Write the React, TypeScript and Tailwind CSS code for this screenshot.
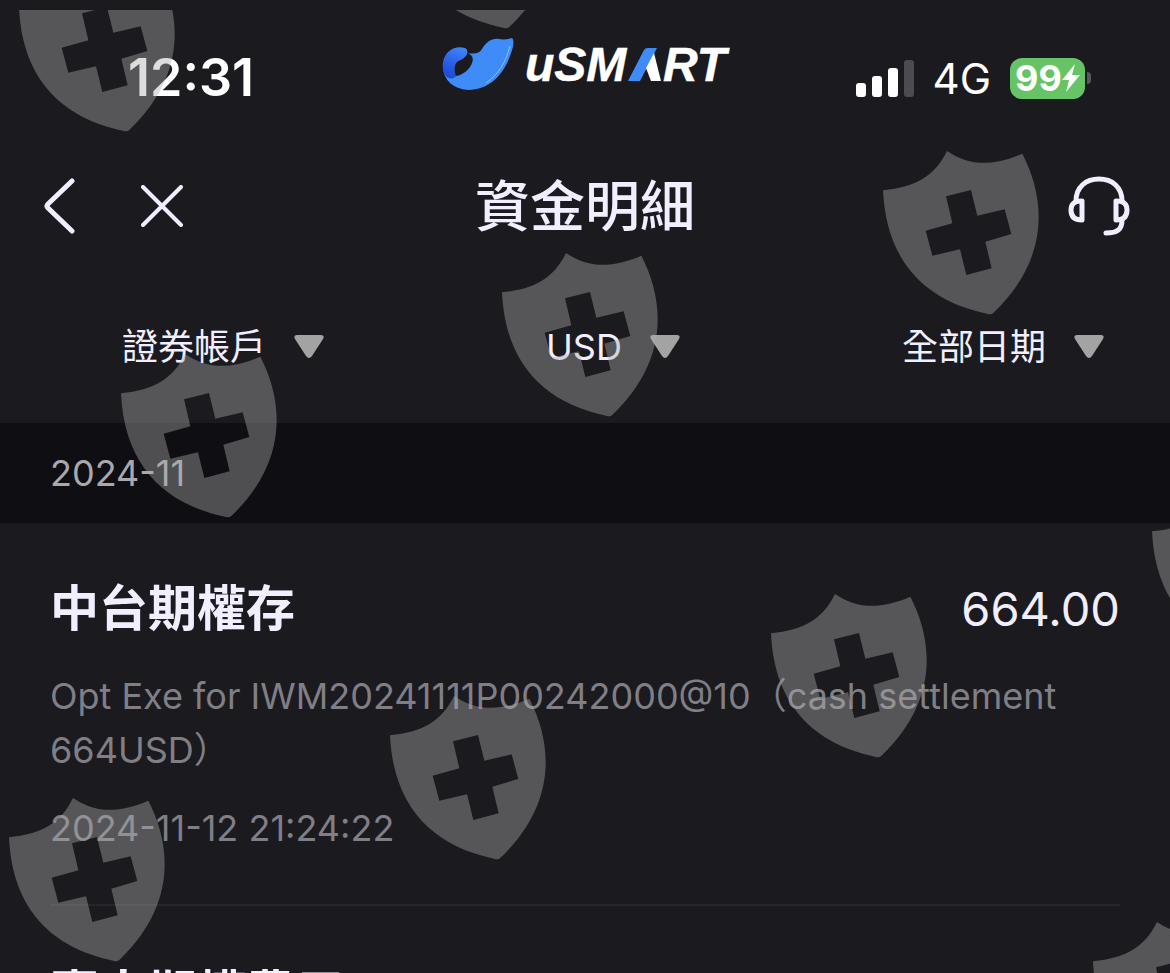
import React from "react";

const SHIELDS: [number, number][] = [
  [19, -42],
  [399, -145],
  [883, 141],
  [502, 243],
  [121, 344],
  [1152, 482],
  [771, 584],
  [390, 686],
  [9, 788],
  [1093, 912],
];

function Watermark() {
  return (
    <svg className="pointer-events-none absolute inset-x-0 top-2.5 bottom-0 h-full w-full overflow-hidden" aria-hidden="true">
      <defs>
        <symbol id="shield" viewBox="0 0 468 492">
          <path
            fillRule="evenodd"
            d="M0 118C100 108 155 75 192 0C260 46 330 46 418 8C486 140 505 320 330 487Q324 492 312 488C130 450 10 335 0 118ZM189 136L264 117L283 194L365 175L385 249L307 272L326 352L250 372L231 295L148 314L128 239L208 217Z"
          />
        </symbol>
      </defs>
      <g fill="#acacac" fillOpacity="0.41">
        {SHIELDS.map(([x, y]) => (
          <use key={`${x}-${y}`} href="#shield" x={x} y={y} width="156" height="164" />
        ))}
      </g>
    </svg>
  );
}

function Logo() {
  return (
    <svg width="290" height="56" viewBox="-2 0 290 56" role="img" aria-label="uSMART">
      <defs>
        <linearGradient id="head" x1="0.7" y1="0" x2="0.4" y2="1">
          <stop offset="0" stopColor="#3f86f6" />
          <stop offset="0.45" stopColor="#2f66ea" />
          <stop offset="1" stopColor="#1d48d6" />
        </linearGradient>
      </defs>
      <path
        d="M1 32C6 41 10 42 14 40C21 39 28 33 30 27C32 22 30 19 26 17C32 18 37 18 40 13C44 6 50 2 57 3C62 4 66 3 70 2C73 5 71 12 68 20C61 40 46 54 26 54C11 53 2 44 1 32Z"
        fill="#3f8bf7"
      />
      <path d="M14 40C12 35 12 29 15 26C17 24 22 24 25 18C26 15 25 13 23 12C13 9 3 15 1 26C0 33 2 38 5 41C8 43 12 43 14 40Z" fill="url(#head)" />
      <path d="M68 10C64 26 56 39 44 47" fill="none" stroke="#8fc0ff" strokeWidth="1" />
      <g fill="#fff" stroke="#fff" strokeWidth="0.5" fontFamily="Liberation Sans, sans-serif" fontSize="48" fontWeight="700" fontStyle="italic">
        <text x="83" y="45">uSM</text>
        <text x="221" y="45">RT</text>
      </g>
      <path d="M186 45L202 14Q203 12 206 12H215L198 45Z" fill="#3f8bf7" />
      <path d="M212 17L219 45H209L204 32Z" fill="#fff" />
    </svg>
  );
}

function Battery() {
  return (
    <div className="flex items-center gap-0.5">
      <div className="flex h-[41px] w-[75px] items-center justify-center rounded-xl bg-[#67c466] text-4xl font-bold">
        <span>99</span>
        <svg width="18" height="28" viewBox="0 0 18 28" fill="#fff" aria-hidden="true">
          <path d="M13 0L0 16H7L4 28L18 11H10Z" />
        </svg>
      </div>
      <div className="h-3 w-1 rounded-r-full bg-[#58575c]" />
    </div>
  );
}

function Signal() {
  return (
    <div className="flex items-end gap-1.5" role="img" aria-label="Signal">
      <div className="h-3.5 w-2.5 rounded-[3px] bg-white" />
      <div className="h-[21px] w-2.5 rounded-[3px] bg-white" />
      <div className="h-[29px] w-2.5 rounded-[3px] bg-white" />
      <div className="h-[37px] w-2.5 rounded-[3px] bg-[#4c4b50]" />
    </div>
  );
}

function Filter({ label }: { label: string }) {
  return (
    <button className="flex items-center gap-7 text-4xl font-normal text-[#f1eeff]">
      <span>{label}</span>
      <svg width="30" height="24" viewBox="0 0 30 24" aria-hidden="true">
        <path d="M3 0H27Q31 0 29 4L18 21Q15 25 12 21L1 4Q-1 0 3 0Z" fill="#a3a3a3" />
      </svg>
    </button>
  );
}

export default function App() {
  return (
    <div className="relative flex h-screen flex-col overflow-hidden bg-[#1b1a1f] font-['Inter','Noto_Sans_CJK_TC',sans-serif] text-[#f1eeff]">
      <div className="grid h-[130px] shrink-0 grid-cols-3 items-center pt-[26px] text-white">
        <div className="pl-32 text-[52px] font-semibold">12:31</div>
        <div className="flex justify-center self-start pt-2.5">
          <Logo />
        </div>
        <div className="flex items-center justify-end gap-[19px] pr-[79px]">
          <Signal />
          <span className="text-[42px]">4G</span>
          <Battery />
        </div>
      </div>

      <header className="grid h-[152px] shrink-0 grid-cols-[1fr_auto_1fr] items-center px-10">
        <div className="flex items-center gap-[63px]">
          <button aria-label="返回">
            <svg width="38" height="56" viewBox="0 0 38 56" fill="none" stroke="currentColor" strokeWidth="5" strokeLinecap="round" strokeLinejoin="round">
              <path d="M32 3L8 26Q6 28 8 30L32 53" />
            </svg>
          </button>
          <button aria-label="關閉">
            <svg width="42" height="42" viewBox="0 0 42 42" fill="none" stroke="currentColor" strokeWidth="4" strokeLinecap="round">
              <path d="M2 2L40 40M40 2L2 40" />
            </svg>
          </button>
        </div>
        <h1 className="text-[55px] font-medium">資金明細</h1>
        <button className="justify-self-end" aria-label="客服">
          <svg width="62" height="60" viewBox="0 0 62 60" fill="none" stroke="currentColor" strokeWidth="5" strokeLinecap="round" strokeLinejoin="round">
            <path d="M8 25C8 11 18 3 31 3S54 11 54 25" />
            <path d="M14 25V44C7 44 3 41 3 34S7 25 14 25Z" />
            <path d="M48 25V44C55 44 59 41 59 34S55 25 48 25Z" />
            <path d="M54 44C54 53 50 57 38 57" />
          </svg>
        </button>
      </header>

      <div className="flex h-[141px] shrink-0 items-start justify-between pr-[66px] pl-[122px] pt-[45px]">
        <Filter label="證券帳戶" />
        <Filter label="USD" />
        <Filter label="全部日期" />
      </div>

      <h2 className="flex h-[100px] shrink-0 items-center bg-[#0f0e13] px-[50px] text-4xl font-normal text-[#a9a8ac]">2024-11</h2>

      <main className="px-[50px]">
        <article className="border-b-2 border-[#26252b] pt-[50px] pb-[49px]">
          <div className="flex items-center justify-between">
            <h3 className="text-[49px] leading-[72px] font-bold">中台期權存</h3>
            <span className="text-[47px]">664.00</span>
          </div>
          <p className="mt-6 text-4xl leading-[54px] font-normal text-[#807f86]">
            Opt Exe for IWM20241111P00242000@10（cash settlement 664USD）
          </p>
          <time className="mt-6 block text-4xl leading-[54px] font-normal text-[#807f86]">2024-11-12 21:24:22</time>
        </article>
        <article className="pt-[52px]">
          <h3 className="text-[49px] leading-[72px] font-bold">賣出期權費用</h3>
        </article>
      </main>

      <Watermark />
    </div>
  );
}
